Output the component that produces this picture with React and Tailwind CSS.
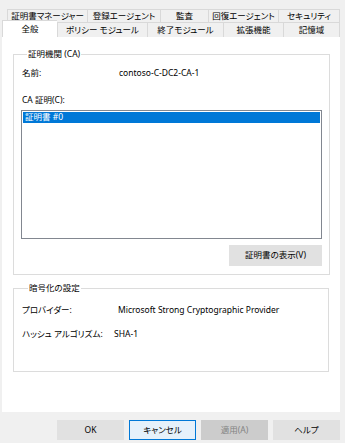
const topTabs = [
  { label: '証明書マネージャー', w: 'w-[80px]' },
  { label: '登録エージェント', w: 'w-[73px]' },
  { label: '監査', w: 'w-[48px]' },
  { label: '回復エージェント', w: 'w-[70px]' },
  { label: 'セキュリティ', w: 'w-[62px]' },
];

const bottomTabs = [
  { label: 'ポリシー モジュール', w: 'w-[90px]' },
  { label: '終了モジュール', w: 'w-[76px]' },
  { label: '拡張機能', w: 'w-[60px]' },
  { label: '記憶域', w: 'w-[57px]' },
];

function Group({ title, className, children }) {
  return (
    <fieldset className={`border border-[#dcdcdc] ${className}`}>
      <legend className="ml-[6px] px-[1px]">{title}</legend>
      {children}
    </fieldset>
  );
}

function Btn({ children, className = '' }) {
  return (
    <div className={`flex h-[20px] w-[67px] items-center justify-center border ${className}`}>
      {children}
    </div>
  );
}

export default function App() {
  return (
    <div className="h-[443px] w-[345px] overflow-hidden bg-[#f0f0f0] font-['Noto_Sans','Noto_Sans_CJK_JP',sans-serif] text-[8.5px] leading-none text-[#000] [font-feature-settings:'palt']">
      <div className="flex pl-[7px] pt-[9px]">
        {topTabs.map((t) => (
          <div
            key={t.label}
            className={`${t.w} flex h-[13px] items-center justify-center border-l border-t border-[#d9d9d9] bg-[#f0f0f0] last:border-r`}
          >
            {t.label}
          </div>
        ))}
      </div>
      <div className="flex pl-[2px]">
        <div className="relative z-10 -mt-[2px] flex h-[17px] w-[55px] items-center justify-center border-l border-t border-[#d9d9d9] bg-white">
          全般
        </div>
        {bottomTabs.map((t) => (
          <div
            key={t.label}
            className={`${t.w} flex h-[15px] items-center justify-center border-l border-t border-[#d9d9d9] bg-[#f0f0f0] last:border-r`}
          >
            {t.label}
          </div>
        ))}
      </div>

      <div className="ml-[2px] h-[375px] w-[338px] bg-white px-[11px] pt-[13px]">
        <Group title="証明機関 (CA)" className="h-[225px] w-[316px] px-[7px]">
          <div className="mt-[9px] flex h-[12px] items-center pl-[1px]">
            <span className="w-[97px]">名前:</span>
            <span>contoso-C-DC2-CA-1</span>
          </div>
          <div className="mt-[15px] flex h-[12px] items-center pl-[1px]">CA 証明(C):</div>
          <div className="mt-[3px] h-[129px] w-[301px] border border-[#828790] bg-white p-[1px]">
            <div className="flex h-[11px] items-center bg-[#0078d7] pl-[2px] text-white">
              証明書 #0
            </div>
          </div>
          <div className="mt-[6px] flex justify-end">
            <div className="flex h-[21px] w-[93px] items-center justify-center border border-[#e1e1e1] bg-[#e1e1e1]">
              証明書の表示(V)
            </div>
          </div>
        </Group>

        <Group title="暗号化の設定" className="mt-[9px] h-[88px] w-[316px] px-[8px]">
          <div className="mt-[12px] flex h-[12px] items-center">
            <span className="w-[96px]">プロバイダー:</span>
            <span>Microsoft Strong Cryptographic Provider</span>
          </div>
          <div className="mt-[12px] flex h-[12px] items-center">
            <span className="w-[92px] whitespace-nowrap">ハッシュ アルゴリズム:</span>
            <span>SHA-1</span>
          </div>
        </Group>
      </div>

      <div className="mt-[8px] flex justify-end gap-[5px] pr-[5px]">
        <Btn className="border-[#e1e1e1] bg-[#e1e1e1]">OK</Btn>
        <Btn className="border-[#0078d7] bg-[#e5f1fb]">キャンセル</Btn>
        <Btn className="border-[#cccccc] bg-[#cccccc] text-[#838383]">適用(A)</Btn>
        <Btn className="border-[#e1e1e1] bg-[#e1e1e1]">ヘルプ</Btn>
      </div>
    </div>
  );
}
